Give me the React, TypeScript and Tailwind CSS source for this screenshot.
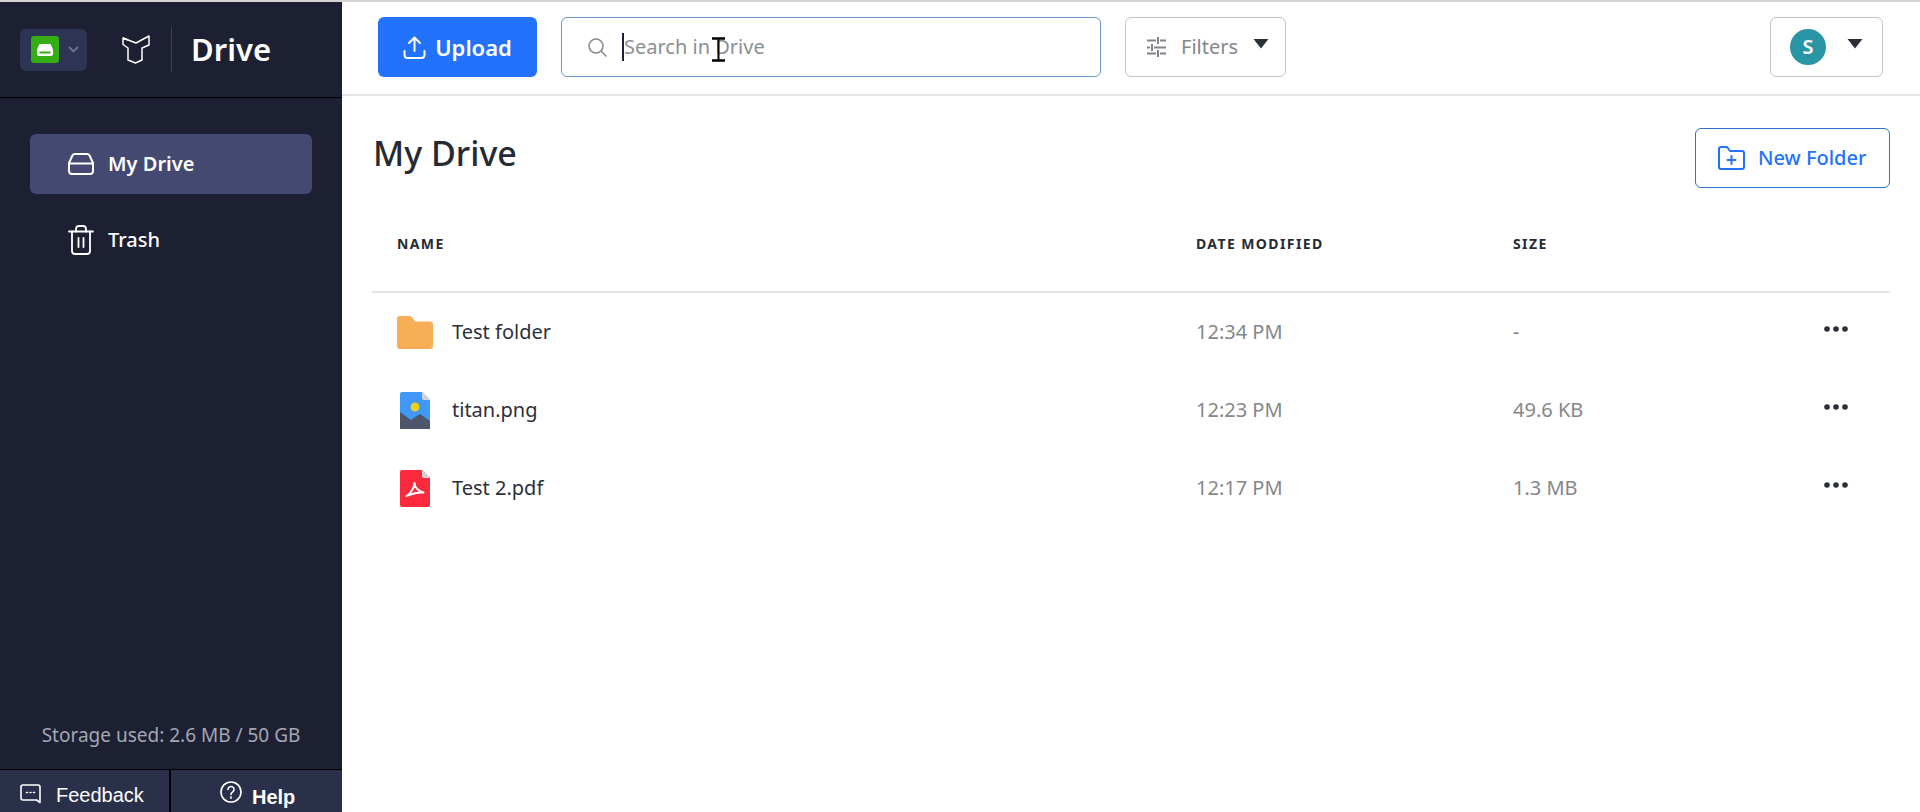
const font = "font-['Noto_Sans','Open_Sans',sans-serif]";

function WorkspaceIcon() {
  return (
    <div className="flex h-[27px] w-[28px] items-center justify-center rounded-[3px] bg-[#35ad14]">
      <svg width="18" height="14" viewBox="0 0 18 14" fill="none">
        <path d="M3.5 1h11l2.5 5.5V11a2 2 0 0 1-2 2H3a2 2 0 0 1-2-2V6.500z" fill="#fff" />
        <rect x="3.500" y="8.500" width="11" height="2" fill="#35ad14" />
      </svg>
    </div>
  );
}

function Logo() {
  return (
    <svg width="28" height="29" viewBox="0 0 28 29" fill="none" stroke="#fff" strokeWidth="1.500" strokeLinejoin="round">
      <path d="M1 3 L14 8 L27 1 V10 L20 13 V25 L13.500 28 L6 25 V13 L1 9.500 Z" />
      <path d="M14 8 V12 M6 13 L14 16 M14 16 V27" strokeOpacity="0" />
      <path d="M1 3 L6 5" />
    </svg>
  );
}

function DriveIcon() {
  return (
    <svg width="26" height="22" viewBox="0 0 26 22" fill="none" stroke="#fff" strokeWidth="2" strokeLinejoin="round">
      <path d="M7 1h12a3 3 0 0 1 2.600 1.500L25 10v8a3 3 0 0 1-3 3H4a3 3 0 0 1-3-3v-8l3.400-7.500A3 3 0 0 1 7 1z" />
      <path d="M1 10.500h24" />
    </svg>
  );
}

function TrashIcon() {
  return (
    <svg width="26" height="30" viewBox="0 0 26 30" fill="none" stroke="#fff" strokeWidth="1.800" strokeLinecap="round" strokeLinejoin="round">
      <path d="M1 6.500h24" />
      <path d="M4 6.500V26a3 3 0 0 0 3 3h12a3 3 0 0 0 3-3V6.500" />
      <path d="M8 6.500V4a3 3 0 0 1 3-3h4a3 3 0 0 1 3 3v2.500" />
      <path d="M10.500 13v9M15.500 13v9" />
    </svg>
  );
}

function FolderIcon() {
  return (
    <svg width="36" height="33" viewBox="0 0 36 33">
      <path d="M3 0h9c1.500 0 2.500.6 3.500 1.800L18 5.500h15a3 3 0 0 1 3 3V30a3 3 0 0 1-3 3H3a3 3 0 0 1-3-3V3a3 3 0 0 1 3-3z" fill="#f7ae57" />
    </svg>
  );
}

function ImageIcon() {
  return (
    <svg width="30" height="37" viewBox="0 0 30 37">
      <path d="M2 0h20l8 8v27a2 2 0 0 1-2 2H2a2 2 0 0 1-2-2V2a2 2 0 0 1 2-2z" fill="#3f98f5" />
      <path d="M22 0l8 8h-6a2 2 0 0 1-2-2z" fill="#d0d3d8" />
      <circle cx="15" cy="15" r="4.500" fill="#ecd01c" />
      <path d="M0 20l11 8 4-3 5-3 10 7v8a2 2 0 0 1-2 2H2a2 2 0 0 1-2-2z" fill="#4d566b" />
    </svg>
  );
}

function PdfIcon() {
  return (
    <svg width="30" height="37" viewBox="0 0 30 37">
      <path d="M2 0h20l8 8v27a2 2 0 0 1-2 2H2a2 2 0 0 1-2-2V2a2 2 0 0 1 2-2z" fill="#fb2a3d" />
      <path d="M22 0l8 8h-6a2 2 0 0 1-2-2z" fill="#d0d3d8" />
      <path d="M14.500 13c0 4-3.500 10.500-8 13M14.500 13c0 4 4 8.500 9 9.500M6.500 26l1-.5c4-1.500 11-3.500 16-3" fill="none" stroke="#fff" strokeWidth="2" strokeLinecap="round" />
    </svg>
  );
}

function Dots() {
  return (
    <svg width="24" height="6" viewBox="0 0 24 6" fill="#2b2f3a">
      <circle cx="3" cy="3" r="2.800" />
      <circle cx="12" cy="3" r="2.800" />
      <circle cx="21" cy="3" r="2.800" />
    </svg>
  );
}

function Caret({ color = "#2b2f3a" }: { color?: string }) {
  return (
    <svg width="16" height="10" viewBox="0 0 16 10">
      <path d="M0.500 0h15L8 9.500z" fill={color} />
    </svg>
  );
}

const rows = [
  { name: "Test folder", date: "12:34 PM", size: "-", icon: <FolderIcon /> },
  { name: "titan.png", date: "12:23 PM", size: "49.6 KB", icon: <ImageIcon /> },
  { name: "Test 2.pdf", date: "12:17 PM", size: "1.3 MB", icon: <PdfIcon /> },
];

export default function App() {
  return (
    <div className={`flex h-[812px] w-[1920px] flex-col overflow-hidden border-t-2 border-[#d4d4d4] bg-white ${font}`}>
      <div className="flex min-h-0 flex-1">
        <aside className="flex w-[342px] shrink-0 flex-col bg-[#1c2032]">
          <div className="flex h-[96px] items-center border-b border-black pl-5">
            <div className="flex h-[42px] w-[67px] items-center gap-[9px] rounded-md bg-[#2e3453] pl-[11px]">
              <WorkspaceIcon />
              <svg width="11" height="7" viewBox="0 0 11 7" fill="none" stroke="#6b7390" strokeWidth="1.800">
                <path d="M1 1l4.500 4.500L10 1" />
              </svg>
            </div>
            <div className="ml-[35px]">
              <Logo />
            </div>
            <div className="ml-[21px] h-[45px] w-px bg-[#3a3f55]" />
            <span className="ml-[19px] text-[31px] font-semibold leading-none text-white">Drive</span>
          </div>

          <nav className="mt-[36px] flex flex-col gap-[16px] px-[30px]">
            <div className="flex h-[60px] w-[282px] items-center gap-[14px] rounded-md bg-[#444972] pl-[38px] text-[20px] font-semibold text-white">
              <DriveIcon />
              <span>My Drive</span>
            </div>
            <div className="flex h-[60px] w-[282px] items-center gap-[14px] pl-[38px] text-[20px] font-medium text-white">
              <TrashIcon />
              <span>Trash</span>
            </div>
          </nav>

          <div className="mt-auto pb-[20px] text-center text-[19px] text-[#a3a8b3]">Storage used: 2.6 MB / 50 GB</div>

          <div className="flex h-[43px] overflow-hidden border-t border-black bg-[#2a3049] font-['Liberation_Sans',sans-serif] text-white">
            <div className="flex w-[171px] items-start border-r-2 border-black pl-[20px] pt-[14px]">
              <svg width="21" height="23" viewBox="0 0 21 23" fill="none" stroke="#fff" strokeWidth="1.600" strokeLinejoin="round">
                <path d="M3 1h15a2 2 0 0 1 2 2v15.500L16.500 16H3a2 2 0 0 1-2-2V3a2 2 0 0 1 2-2z" />
                <path d="M6.500 8.500h1M10 8.500h1M13.500 8.500h1" strokeLinecap="round" />
              </svg>
              <span className="ml-[15px] text-[20px] leading-[22px]">Feedback</span>
            </div>
            <div className="flex flex-1 items-start pl-[49px] pt-[11px]">
              <svg width="22" height="22" viewBox="0 0 22 22" fill="none" stroke="#fff" strokeWidth="1.600" strokeLinecap="round">
                <circle cx="11" cy="11" r="10" />
                <path d="M8 8.500a3 3 0 1 1 4.500 2.600c-1 .6-1.500 1.200-1.500 2.400" />
                <circle cx="11" cy="16.500" r="0.400" />
              </svg>
              <span className="ml-[10px] mt-[5px] text-[20px] font-semibold leading-[22px]">Help</span>
            </div>
          </div>
        </aside>

        <main className="flex min-w-0 flex-1 flex-col">
          <header className="flex h-[94px] items-center border-b-2 border-[#e2e4e6] pb-[2px] pl-[36px] pr-[37px]">
            <button className="flex h-[60px] w-[159px] items-center justify-center gap-[9px] rounded-md bg-[#2272fb] text-[22px] font-semibold text-white">
              <svg width="23" height="23" viewBox="0 0 23 23" fill="none" stroke="#fff" strokeWidth="2" strokeLinecap="round" strokeLinejoin="round">
                <path d="M11.500 15V2M6 7l5.500-5.500L17 7" />
                <path d="M1.500 15v4a3 3 0 0 0 3 3h14a3 3 0 0 0 3-3v-4" />
              </svg>
              Upload
            </button>

            <div className="relative ml-[24px] flex h-[60px] w-[540px] items-center rounded-md border border-[#6a96d0] pl-[26px]">
              <svg width="19" height="19" viewBox="0 0 19 19" fill="none" stroke="#8a8a8a" strokeWidth="1.600" strokeLinecap="round">
                <circle cx="8" cy="8" r="7" />
                <path d="M13.200 13.200L18 18" />
              </svg>
              <div className="ml-[15px] h-[28px] w-[2px] bg-[#1c2032]" />
              <span className="text-[20px] text-[#8b8f94]">Search in Drive</span>
              <svg className="absolute left-[149px] top-[19px]" width="15" height="25" viewBox="0 0 15 25" fill="none" stroke="#000" strokeWidth="2.400">
                <path d="M1 1.500h13M1 23.500h13" />
                <path d="M7.500 1.500v22" strokeWidth="2" />
              </svg>
            </div>

            <button className="ml-[24px] flex h-[60px] w-[161px] items-center rounded-md border border-[#c2c4c8] pl-[21px] text-[20px] text-[#85868c]">
              <svg width="19" height="20" viewBox="0 0 19 20" fill="none" stroke="#85808a" strokeWidth="2">
                <path d="M0 3.500h9M13 3.500h6M11 0v7M0 10.500h3M7 10.500h12M5 7v7M0 16.500h9M13 16.500h6M11 13v7" />
              </svg>
              <span className="ml-[15px]">Filters</span>
              <span className="ml-[15px] -mt-[6px]"><Caret /></span>
            </button>

            <button className="ml-auto flex h-[60px] w-[113px] items-center rounded-md border border-[#c2c4c8] pl-[19px]">
              <span className="flex h-[36px] w-[36px] items-center justify-center rounded-full bg-[#2a95a5] text-[20px] font-semibold text-white">S</span>
              <span className="ml-[21px] -mt-[6px]"><Caret /></span>
            </button>
          </header>

          <div className="flex-1 pl-[30px] pr-[30px]">
            <div className="flex h-[92px] items-end justify-between">
              <h1 className="pb-[12px] pl-[1px] text-[34px] font-medium leading-[46px] text-[#262a33]">My Drive</h1>
              <button className="flex h-[60px] w-[195px] items-center rounded-md border border-[#2f72d0] pl-[22px] text-[20px] font-medium text-[#2272fb]">
                <svg width="27" height="24" viewBox="0 0 27 24" fill="none" stroke="#2272fb" strokeWidth="2" strokeLinejoin="round" strokeLinecap="round">
                  <path d="M1 3a2 2 0 0 1 2-2h6l3 4h12a2 2 0 0 1 2 2v14a2 2 0 0 1-2 2H3a2 2 0 0 1-2-2z" />
                  <path d="M13.500 10v8M9.500 14h8" />
                </svg>
                <span className="ml-[13px]">New Folder</span>
              </button>
            </div>

            <div className="mt-[37px] grid h-[68px] grid-cols-[799px_317px_1fr] border-b-2 border-[#e2e4e6] pb-[30px] pl-[25px] text-[14px] font-bold leading-[38px] tracking-[1.400px] text-[#262a33]">
              <div>NAME</div>
              <div>DATE MODIFIED</div>
              <div>SIZE</div>
            </div>

            {rows.map((r) => (
              <div key={r.name} className="grid h-[78px] grid-cols-[799px_317px_1fr_66px] items-center pl-[25px] text-[20px]">
                <div className="flex items-center text-[#2c303a]">
                  <div className="flex w-[36px] justify-center">{r.icon}</div>
                  <span className="ml-[19px]">{r.name}</span>
                </div>
                <div className="text-[#85878c]">{r.date}</div>
                <div className="text-[#85878c]">{r.size}</div>
                <div className="-mt-[6px]"><Dots /></div>
              </div>
            ))}
          </div>
        </main>
      </div>
    </div>
  );
}
